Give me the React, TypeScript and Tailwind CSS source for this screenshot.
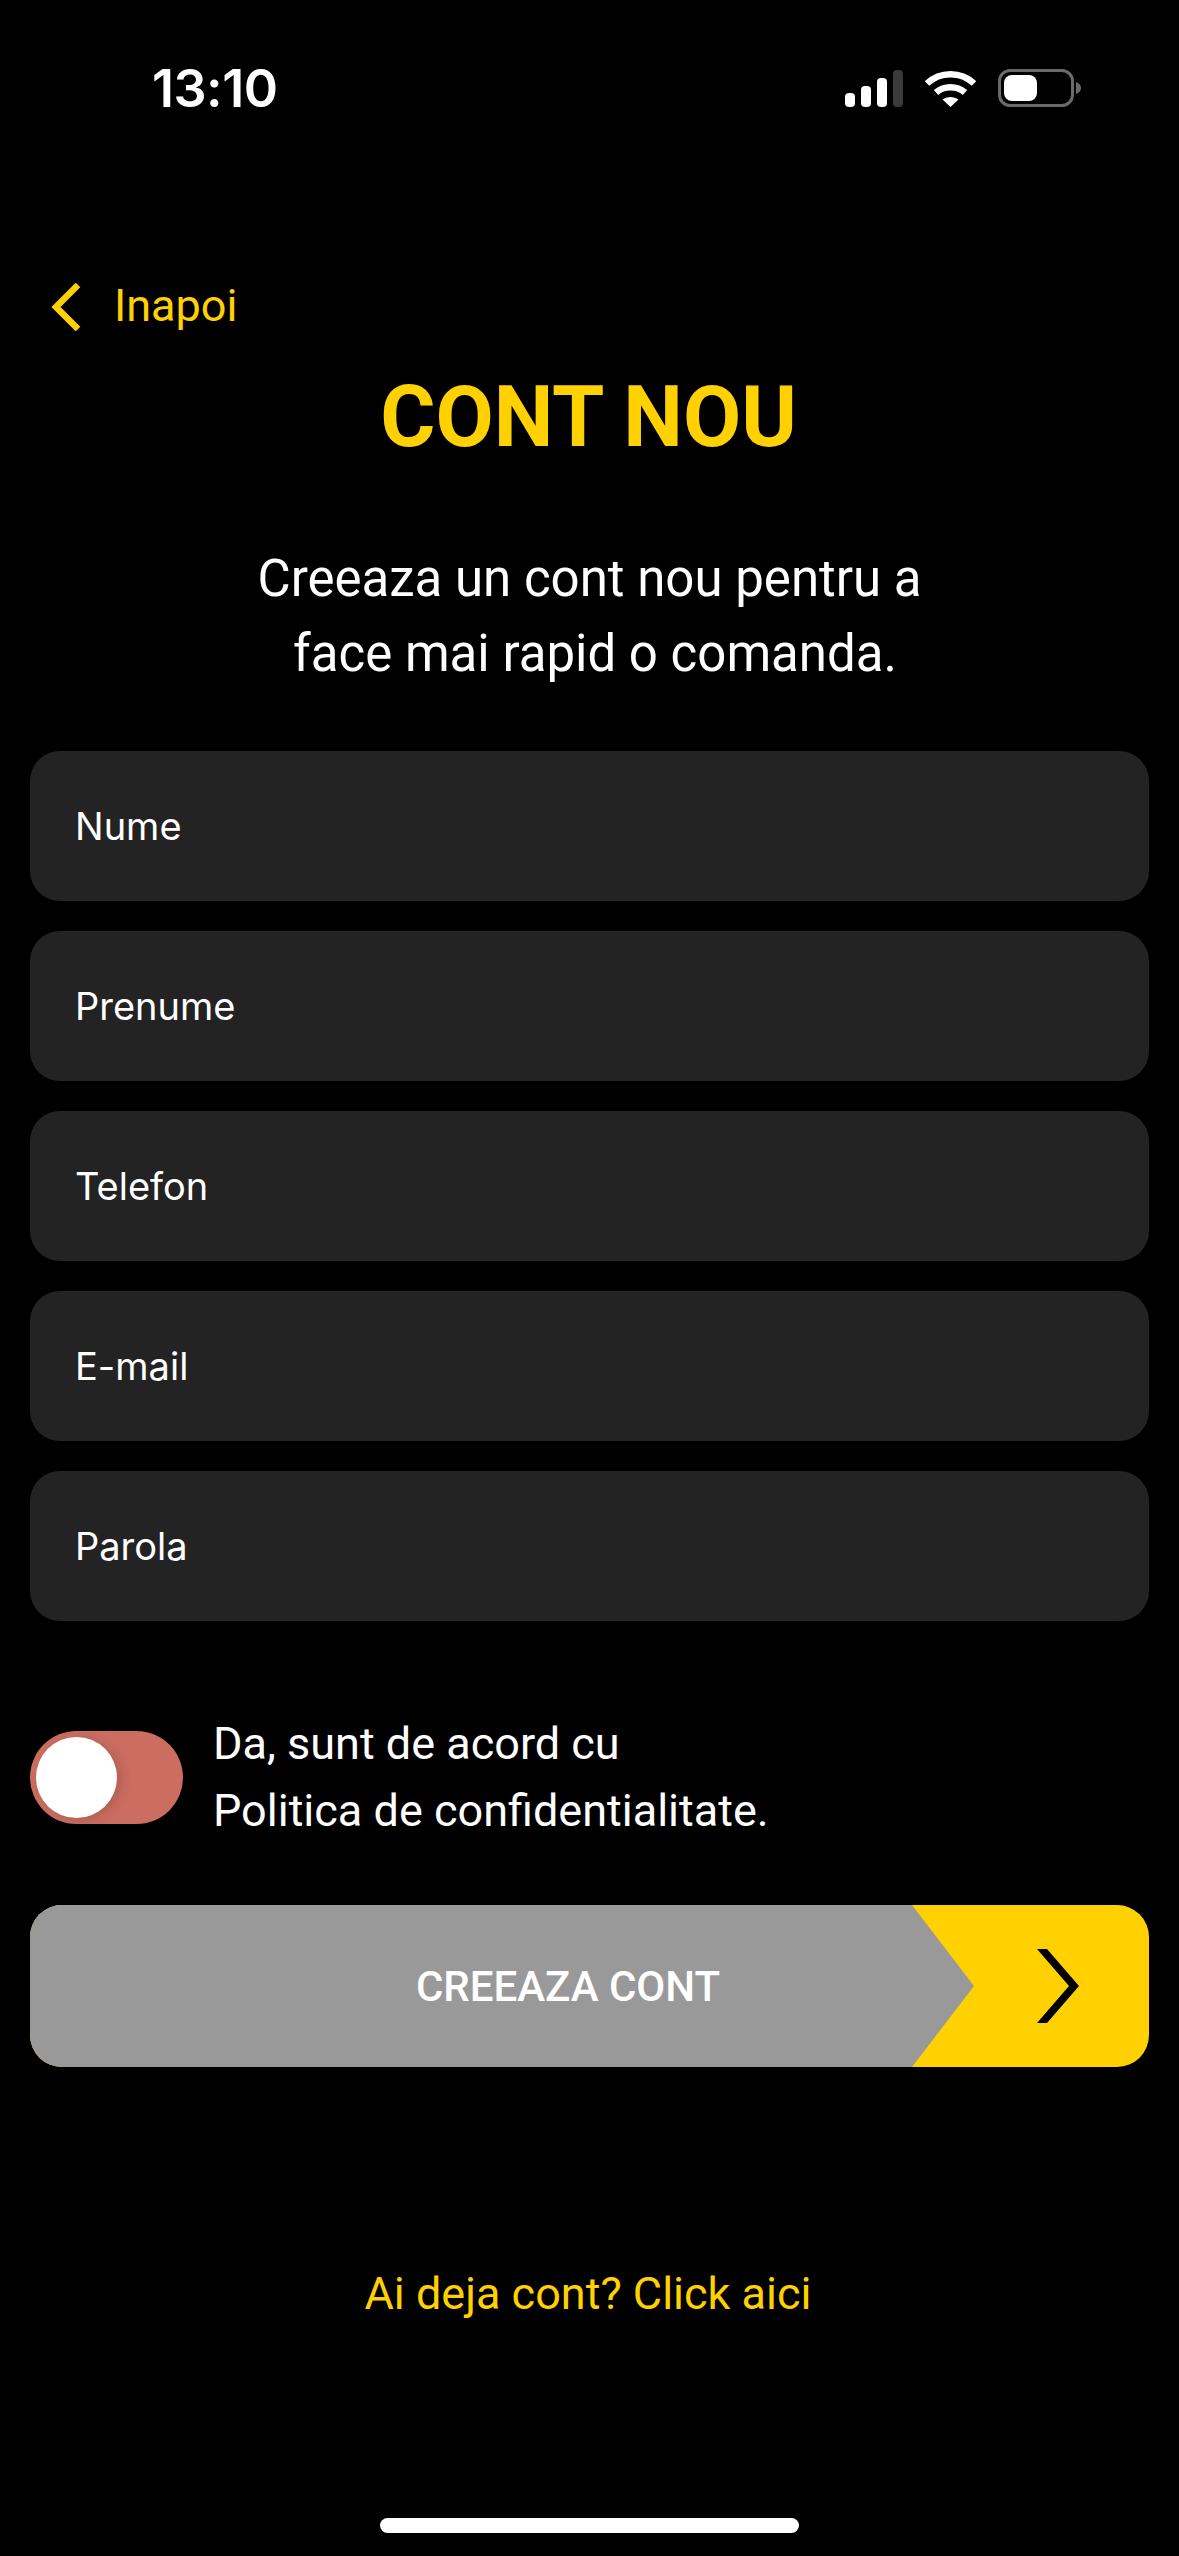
import React from "react";

const fields = ["Nume", "Prenume", "Telefon", "E-mail", "Parola"];

function StatusIcons() {
  return (
    <div className="flex items-end">
      <svg width="58" height="37" viewBox="0 0 58 37" className="block">
        <rect x="0" y="23" width="10" height="14" rx="4" fill="#fff" />
        <rect x="16" y="16" width="10" height="21" rx="4" fill="#fff" />
        <rect x="32" y="8" width="10" height="29" rx="4" fill="#fff" />
        <rect x="48" y="0" width="10" height="37" rx="4" fill="#3a3a3a" />
      </svg>
      <svg width="51" height="37" viewBox="0 0 51 37" className="ml-[22px] block">
        <path d="M2 13.5C15 1 36 1 49 13.5" fill="none" stroke="#fff" strokeWidth="6.5" />
        <path d="M11 22.5C19 15.5 32 15.5 40 22.5" fill="none" stroke="#fff" strokeWidth="6.5" />
        <path d="M17.5 29.5C22 26 29 26 33.5 29.5L25.5 37Z" fill="#fff" />
      </svg>
      <div className="ml-[22px] box-border flex h-[38px] w-[76px] items-center rounded-[12px] border-[3px] border-[#6a6a6a] p-[3px]">
        <div className="h-[26px] w-[33px] rounded-[8px] bg-white" />
      </div>
      <svg width="5" height="12" viewBox="0 0 5 12" className="mb-[13px] ml-[2px] block">
        <path d="M0 0C3 1 5 3 5 6C5 9 3 11 0 12Z" fill="#6a6a6a" />
      </svg>
    </div>
  );
}

export default function App() {
  return (
    <div className="relative flex min-h-[2556px] w-[1179px] flex-col bg-black font-['Roboto',sans-serif] text-white">
      <div className="flex h-[107px] items-end justify-between pl-[152px] pr-[98px]">
        <span className="translate-y-[6px] font-['Inter',sans-serif] text-[52px] leading-[49px] font-semibold tracking-[-0.5px]">13:10</span>
        <StatusIcons />
      </div>

      <div className="mt-[176px] flex h-[48px] items-center pl-[51px] text-[#ffd100]">
        <svg width="30" height="48" viewBox="0 0 30 48" className="block">
          <path d="M27 2 L5 24 L27 46" fill="none" stroke="#ffd100" strokeWidth="6.5" />
        </svg>
        <span className="ml-[33px] -translate-y-[1px] text-[45px] leading-[48px]">Inapoi</span>
      </div>

      <h1 className="mt-[39px] pr-[2px] text-center text-[84.5px] leading-[96px] font-bold text-[#ffd100]">CONT NOU</h1>

      <p className="mt-[75px] text-center text-[51px] leading-[75px]">
        Creeaza un cont nou pentru a
        <br />
        <span className="ml-[11px]">face mai rapid o comanda.</span>
      </p>

      <div className="mt-[60px] flex flex-col gap-[30px] px-[30px]">
        {fields.map((f) => (
          <div key={f} className="flex h-[150px] items-center rounded-[30px] bg-[#232323] pl-[45px] font-['Inter',sans-serif] text-[38px]">
            {f}
          </div>
        ))}
      </div>

      <div className="mt-[89px] flex items-center px-[30px]">
        <div className="flex h-[93px] w-[153px] items-center rounded-full bg-[#cb6d61] pl-[6px]">
          <div className="h-[81px] w-[81px] rounded-full bg-white shadow-[4px_2px_12px_rgba(0,0,0,0.15)]" />
        </div>
        <p className="ml-[30px] text-[45px] leading-[67px]">
          Da, sunt de acord cu
          <br />
          Politica de confidentialitate.
        </p>
      </div>

      <div className="mx-[30px] mt-[61px] flex h-[162px] overflow-hidden rounded-[32px] bg-[#ffd100]">
        <div className="flex h-full w-[944px] items-center justify-center bg-[#999999] pl-[132px] text-[42px] font-medium [clip-path:polygon(0_0,882px_0,100%_50%,882px_100%,0_100%)]">
          CREEAZA CONT
        </div>
        <div className="flex flex-1 items-center">
          <svg width="42" height="74" viewBox="0 0 42 74" className="ml-[63px] block">
            <path d="M0 0H10L42 37L10 74H0L32 37Z" fill="#000" />
          </svg>
        </div>
      </div>

      <p className="mt-[199px] pr-[3px] text-center text-[45px] leading-[56px] text-[#ffd100]">Ai deja cont? Click aici</p>

      <div className="absolute bottom-[23px] left-[380px] h-[15px] w-[419px] rounded-full bg-white" />
    </div>
  );
}
